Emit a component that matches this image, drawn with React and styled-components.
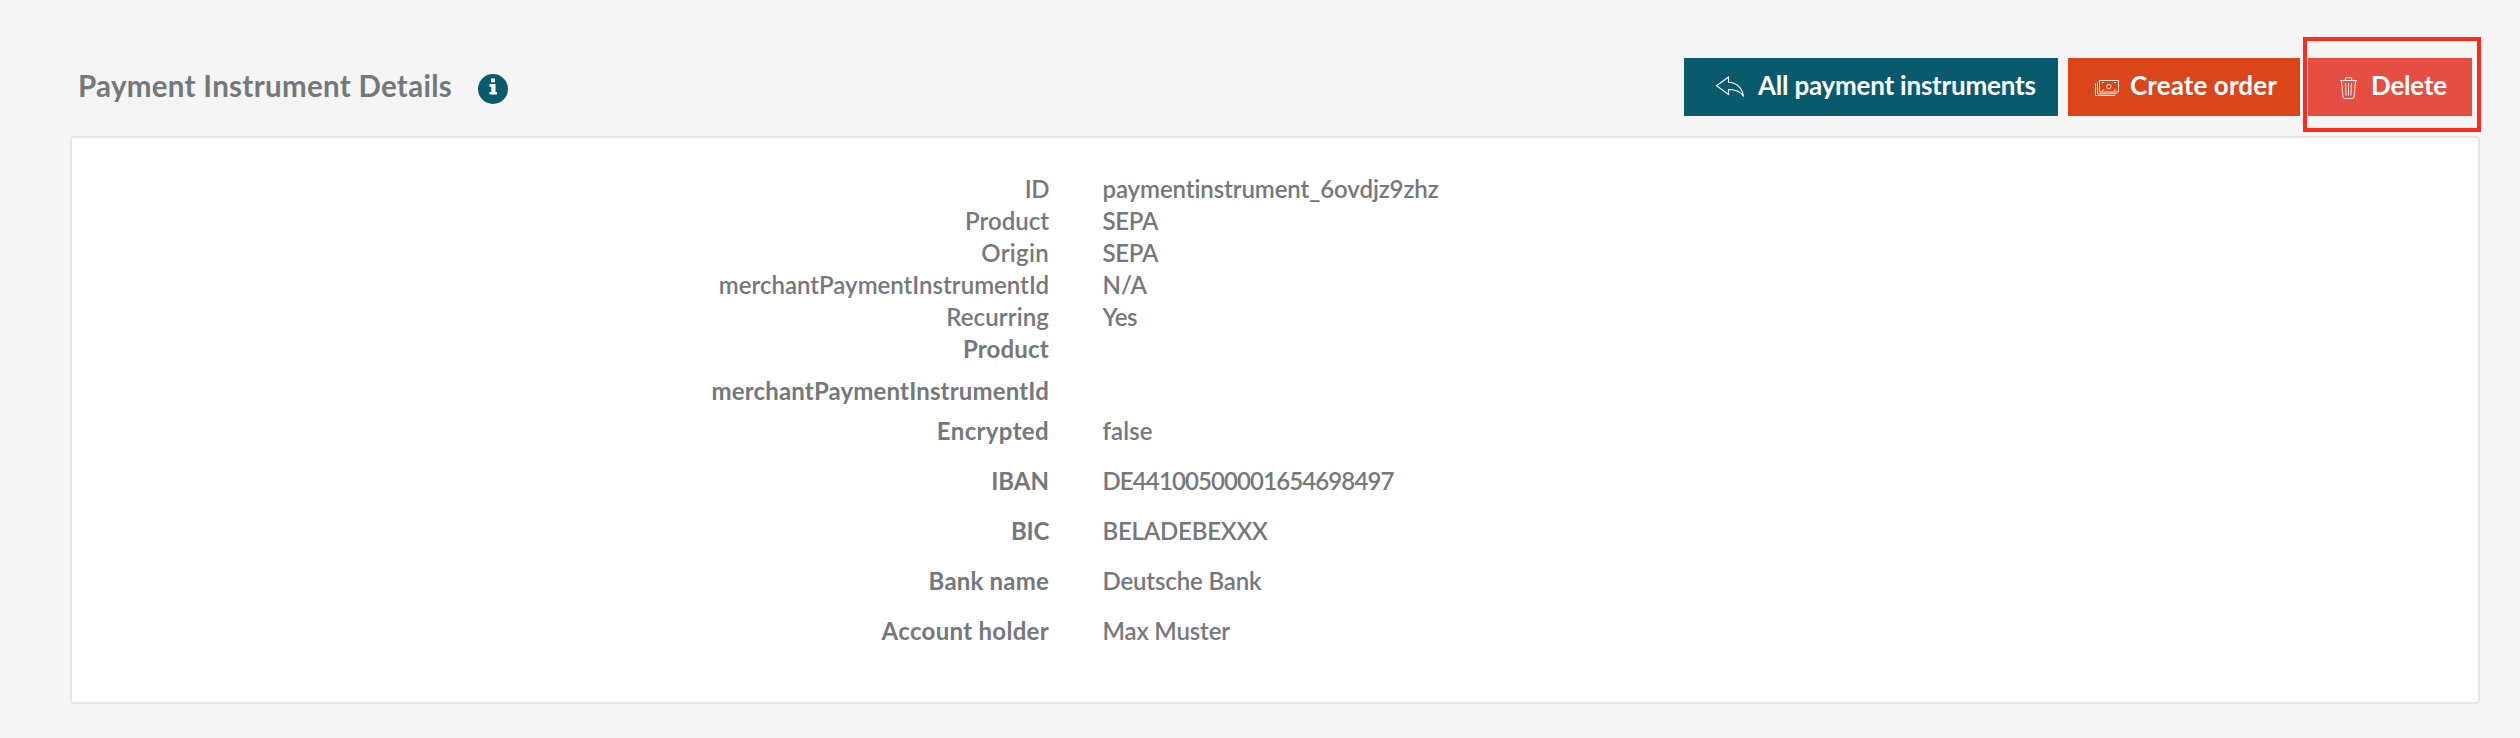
import React from "react";
import styled, { createGlobalStyle } from "styled-components";

const GlobalStyle = createGlobalStyle`
  * { box-sizing: border-box; }
  body {
    margin: 0;
    background: #f5f5f5;
    color: #75787b;
    font-family: Lato, "Open Sans", sans-serif;
  }
`;

const Page = styled.main`
  min-height: 738px;
  padding: 37px 39px 32px 70px;
`;

const Header = styled.header`
  display: flex;
  justify-content: space-between;
  height: 99px;
`;

const TitleGroup = styled.div`
  display: flex;
  align-items: flex-start;
  padding: 31px 0 0 8px;
`;

const Title = styled.h1`
  margin: 0 26px 0 0;
  font-size: 29.5px;
  font-weight: 700;
  line-height: 36px;
  letter-spacing: 0.3px;
`;

const InfoIcon = styled.svg`
  width: 30px;
  height: 30px;
  margin-top: 6px;
`;

const Toolbar = styled.div`
  display: flex;
  align-items: flex-start;
`;

const Button = styled.button`
  display: flex;
  align-items: center;
  width: ${(p) => p.$width}px;
  height: 58px;
  margin: ${(p) => (p.$framed ? "0" : "21px 0 0")};
  padding: 0 0 5px ${(p) => p.$inset}px;
  border: 0;
  color: #fff;
  background: ${(p) => p.$color};
  font: 700 26px/36px Lato, "Open Sans", sans-serif;
  letter-spacing: ${(p) => p.$tracking}px;
  white-space: nowrap;

  & + & {
    margin-left: 10px;
  }
`;

const ButtonIcon = styled.svg`
  flex: none;
  width: ${(p) => p.$w}px;
  height: ${(p) => p.$h}px;
  margin: ${(p) => p.$top}px ${(p) => p.$gap}px 0 0;
  fill: none;
  stroke: #fff;
`;

const Highlight = styled.div`
  width: 178px;
  height: 95px;
  margin-left: 3px;
  padding: 17px 0 0 1px;
  border: 4px solid #ff2a1c;
`;

const Panel = styled.section`
  width: 2410px;
  height: 568px;
  padding-top: 35px;
  border: 2px solid #e5e5e5;
  border-radius: 4px;
  background: #fff;
`;

const Row = styled.div`
  display: grid;
  grid-template-columns: 977px 1fr;
  column-gap: 53.5px;
  height: ${(p) => p.$height}px;
  font-size: 24px;
  line-height: 32px;
`;

const Label = styled.div`
  text-align: right;
  font-weight: ${(p) => (p.$bold ? 700 : 600)};
  letter-spacing: ${(p) => p.$tracking}px;
`;

const Value = styled.div`
  font-weight: 600;
  letter-spacing: ${(p) => p.$tracking}px;
`;

const rows = [
  { label: "ID", lt: -0.5, value: "paymentinstrument_6ovdjz9zhz", vt: -0.09 },
  { label: "Product", value: "SEPA", vt: -0.3 },
  { label: "Origin", lt: 0.3, value: "SEPA", vt: -0.3 },
  { label: "merchantPaymentInstrumentId", value: "N/A" },
  { label: "Recurring", lt: 0.1, value: "Yes", vt: -0.4 },
  { label: "Product", lt: 0.2, bold: true, height: 42 },
  { label: "merchantPaymentInstrumentId", lt: 0.15, bold: true, height: 40 },
  { label: "Encrypted", lt: 0.35, bold: true, value: "false", vt: 0.1, height: 50 },
  { label: "IBAN", bold: true, value: "DE44100500001654698497", vt: -0.885, height: 50 },
  { label: "BIC", lt: -0.3, bold: true, value: "BELADEBEXXX", vt: -0.2, height: 50 },
  { label: "Bank name", lt: 0.2, bold: true, value: "Deutsche Bank", vt: -0.15, height: 50 },
  { label: "Account holder", lt: 0.3, bold: true, value: "Max Muster", vt: -0.15, height: 50 },
];

export default function App() {
  return (
    <>
      <GlobalStyle />
      <Page>
        <Header>
          <TitleGroup>
            <Title>Payment Instrument Details</Title>
            <InfoIcon viewBox="0 0 30 30">
              <circle cx="15" cy="15" r="15" fill="#0a5a6e" />
              <path fill="#fff" d="M13 4.500h4v3.700h-4zM11.500 10h6v8h1.500v2.500h-7.500V18h1.800v-5.300h-1.800z" />
            </InfoIcon>
          </TitleGroup>
          <Toolbar>
            <Button $color="#0a5a6e" $width={374} $inset={31} $tracking={-0.22}>
              <ButtonIcon $w={30} $h={22} $top={5} $gap={13} viewBox="0 0 30 22" strokeWidth="1.1">
                <path d="M13.500 1v5.300C21 6.300 27.500 12 28.500 20.500C25.500 15 20 13.500 13.500 13.500v5L1.500 9.800z" />
              </ButtonIcon>
              All payment instruments
            </Button>
            <Button $color="#da451a" $width={232} $inset={27} $tracking={0.1}>
              <ButtonIcon $w={24} $h={16} $top={7} $gap={11} viewBox="0 0 24 16" strokeWidth="0.9">
                <path d="M4.500.5h19v11.500h-19zM2.500 2.500v11.300h19M.5 3.500v12h19.500M7 2.500h2M19 2.500h2M7 10.200h2M19 10.200h2" />
                <circle cx="13.800" cy="6.500" r="2.200" />
              </ButtonIcon>
              Create order
            </Button>
            <Highlight>
              <Button $framed $color="#e64e43" $width={164} $inset={32} $tracking={-0.2}>
                <ButtonIcon $w={17} $h={22} $top={7} $gap={14} viewBox="0 0 17 22" strokeWidth="0.9">
                  <path d="M0 3.500h17M5 3.500l.7-2.800h5.600l.7 2.800M1.500 3.500l1.300 15.500q.2 2.500 2 2.500h7.400q1.800 0 2-2.500L15.500 3.500M5.500 6l.6 12.500M8.500 6v12.500M11.500 6l-.6 12.500" />
                </ButtonIcon>
                Delete
              </Button>
            </Highlight>
          </Toolbar>
        </Header>
        <Panel>
          {rows.map((r, i) => (
            <Row key={i} $height={r.height || 32}>
              <Label $bold={r.bold} $tracking={r.lt || 0}>{r.label}</Label>
              <Value $tracking={r.vt || 0}>{r.value}</Value>
            </Row>
          ))}
        </Panel>
      </Page>
    </>
  );
}
